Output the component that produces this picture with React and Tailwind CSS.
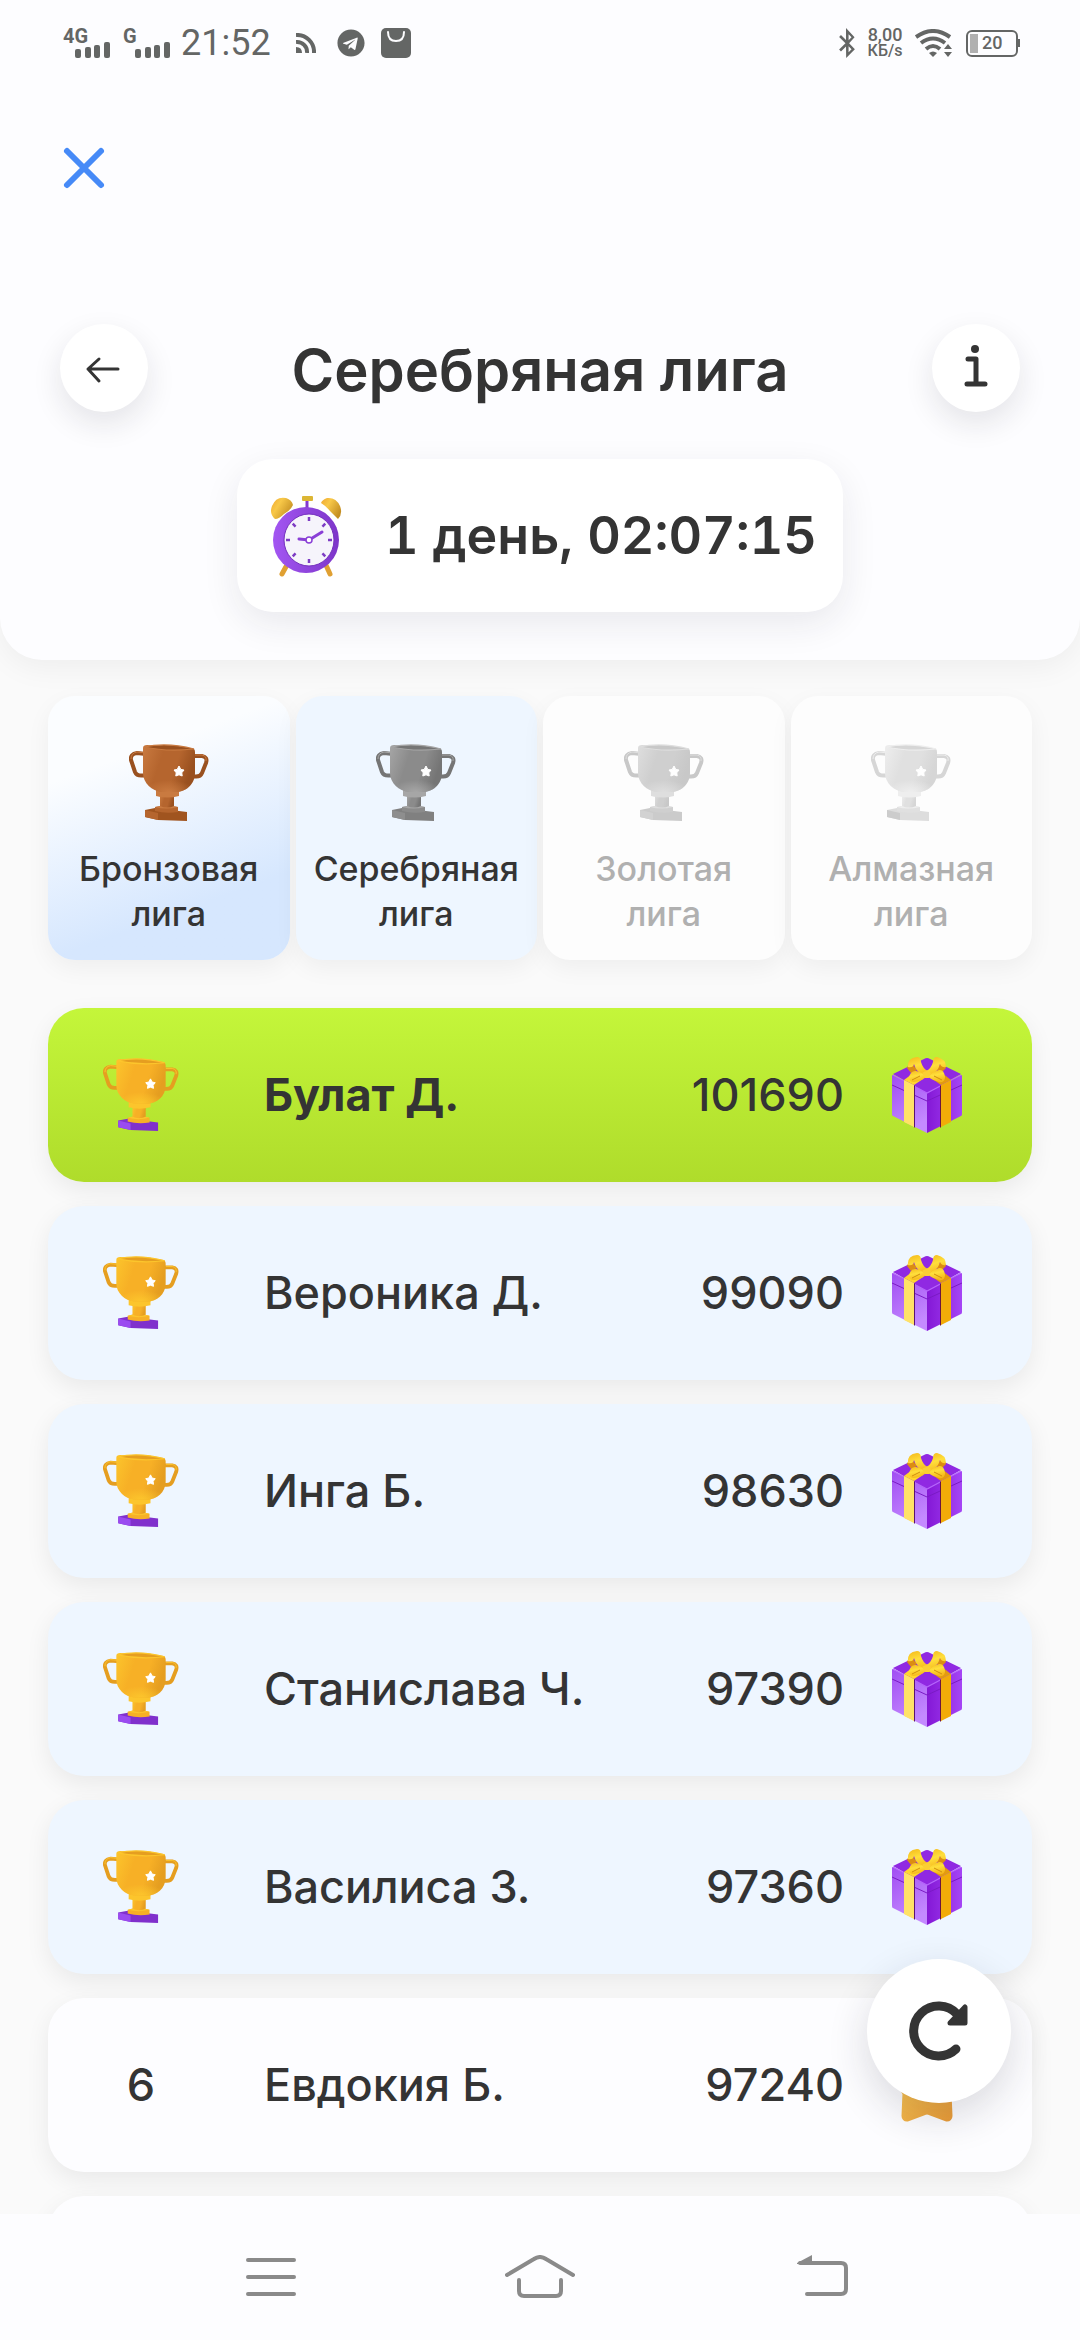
import { FaBluetoothB, FaTelegram } from 'react-icons/fa';

const LEAGUES = [
    { name: 'Бронзовая', metal: 'bronze', card: 'bg-linear-160 from-[#fbfdff] from-25% to-[#d6e7fe] to-75% text-[#343434]' },
    { name: 'Серебряная', metal: 'silver', card: 'bg-[#eef6ff] text-[#343434]' },
    { name: 'Золотая', metal: 'locked', card: 'bg-[#fdfdfd] text-[#b0b0b0]', disabled: true },
    { name: 'Алмазная', metal: 'glass', card: 'bg-[#fdfdfd] text-[#b0b0b0]', disabled: true },
];

const PLAYERS = [
    { place: 1, name: 'Булат Д.', score: 101690, me: true },
    { place: 2, name: 'Вероника Д.', score: 99090 },
    { place: 3, name: 'Инга Б.', score: 98630 },
    { place: 4, name: 'Станислава Ч.', score: 97390 },
    { place: 5, name: 'Василиса З.', score: 97360 },
    { place: 6, name: 'Евдокия Б.', score: 97240 },
];

// [light, mid, dark, base light, base dark]
const METALS = {
    gold: ['#fcc52c', '#f7b026', '#e59e20', '#9a4bf0', '#8030cc'],
    bronze: ['#c97a40', '#b5652e', '#99501f', '#b5652e', '#a0541f'],
    silver: ['#a6a6a6', '#8b8b8b', '#757575', '#8e8e8e', '#808080'],
    locked: ['#dedede', '#cfcfcf', '#c8c8c8', '#d2d2d2', '#cbcbcb'],
    glass: ['#eeeeee', '#e0e0e0', '#d6d6d6', '#cccccc', '#dddddd'],
};

function Trophy({ metal, className }) {
    const [light, mid, dark, baseLight, baseDark] = METALS[metal];
    const id = `bowl-${metal}`;
    return (
        <svg viewBox="0 0 80 78" className={className} aria-hidden="true">
            <defs>
                <linearGradient id={id} x1="0" x2="1" y1="0" y2="0.3">
                    <stop offset="0" stopColor={light} />
                    <stop offset="0.4" stopColor={mid} />
                    <stop offset="0.7" stopColor={mid} />
                    <stop offset="1" stopColor={dark} />
                </linearGradient>
                <radialGradient id={`${id}-glow`} cx="0.5" cy="1" r="0.5">
                    <stop offset="0" stopColor={light} />
                    <stop offset="1" stopColor={light} stopOpacity="0" />
                </radialGradient>
            </defs>
            <g fill="none" strokeLinejoin="round">
                <path d="M17 10 L8 9 Q1 10 2 16 L6 28 Q8 33 17 31" stroke={dark} strokeWidth="4" />
                <path d="M65 12 L73 12 Q79 13 77 19 L73 29 Q71 34 63 32" stroke={dark} strokeWidth="4" />
                <path d="M17 9 L8 8 Q2 9 2 15" stroke={light} strokeWidth="1" />
                <path d="M66 11 L73 11 Q78 12 77 17" stroke={light} strokeWidth="1" />
            </g>
            <path d="M16 66 L26 64 L58 68 V77 L29 76 L16 73 Z" fill={baseDark} />
            <path d="M16 66 L29 69 V76 L16 73 Z" fill={baseLight} />
            <path d="M26 63 Q37 60 49 63 V68 Q37 70 26 67 Z" fill={mid} />
            <path d="M26 63 Q37 60 49 63 Q37 66 26 63 Z" fill={light} />
            <path d="M31 50 H45 V62 Q38 65 31 62 Z" fill={`url(#${id})`} />
            <path d="M27 46 H50 V52 Q38 55 27 52 Z" fill={light} />
            <path d="M14 4 Q14 1 18 1 L62 4 Q66 4 66 8 V29 C66 41 56 48 47 48 H33 C23 47 14 39 14 29 Z" fill={`url(#${id})`} />
            <path d="M14 24 H66 V29 C66 41 56 48 47 48 H33 C23 47 14 39 14 29 Z" fill={`url(#${id}-glow)`} />
            <path d="M15 3 Q38 -2 65 5 Q38 8 15 3 Z" fill={dark} stroke={light} strokeWidth="1.2" />
            <path d="M50 22 L51.8 25.4 L55 26 L52.8 28.8 L53.2 32 L50 30.8 L46.8 32 L47.2 28.8 L45 26 L48.2 25.4 Z" fill="#fff" stroke="#fff" strokeLinejoin="round" />
        </svg>
    );
}

function Gift() {
    return (
        <svg viewBox="0 0 70 76" className="h-[76px] w-[70px]" aria-hidden="true">
            <defs>
                <linearGradient id="gift-left" x1="0" y1="0" x2="0.4" y2="1">
                    <stop offset="0" stopColor="#a04cf2" />
                    <stop offset="1" stopColor="#c48aff" />
                </linearGradient>
                <linearGradient id="gift-right" x1="0" y1="0" x2="1" y2="0">
                    <stop offset="0" stopColor="#8418d6" />
                    <stop offset="1" stopColor="#a545f5" />
                </linearGradient>
                <linearGradient id="ribbon" x1="0" y1="0" x2="0.3" y2="1">
                    <stop offset="0" stopColor="#f4b81a" />
                    <stop offset="0.5" stopColor="#ffdf3c" />
                    <stop offset="1" stopColor="#f6b81c" />
                </linearGradient>
            </defs>
            <path d="M0 18 L35 34 V76 L1 59 Q0 59 0 57 Z" fill="url(#gift-left)" />
            <path d="M70 18 L35 34 V76 L69 59 Q70 59 70 57 Z" fill="url(#gift-right)" />
            <path d="M1 17 L32 2 Q35 0 38 2 L69 17 L37 35 Q35 36 33 35 Z" fill="#9029e2" />
            <path d="M0 28 L35 44 L70 28" fill="none" stroke="#7a1bc4" strokeWidth="1" />
            <path d="M1 18 L35 36 L69 18" fill="none" stroke="#b565fb" strokeWidth="1.2" />
            <path d="M12 23 L22 28 V70 L12 65 Z" fill="#ffe267" />
            <path d="M22 28 L23 29 V71 L22 70 Z" fill="#5a1470" />
            <path d="M59 23 L49 28 V70 L59 65 Z" fill="#f2ab08" />
            <path d="M49 28 L48 29 V71 L49 70 Z" fill="#6a1440" />
            <path d="M12 23 L20 17 L31 22 L22 28 Z" fill="#ffd62e" />
            <path d="M59 23 L50 16 L39 21 L49 28 Z" fill="#e39b10" />
            {/* bow */}
            <path d="M15 11 L18 4 L25 13 L19 16 Z M54 11 L51 4 L44 13 L50 15 Z" fill="#dc8d12" />
            <path d="M16 10 Q15 1 25 0 Q29 0 29 5 Q31 12 36 14 L33 20 Q24 15 22 7 Q21 11 16 10 Z" fill="url(#ribbon)" />
            <path d="M54 10 Q54 2 45 0 Q41 0 41 5 Q39 12 34 14 L37 20 Q46 15 48 7 Q50 11 54 10 Z" fill="url(#ribbon)" />
            <path d="M17 20 Q19 13 24 14 Q30 15 34 20 Q30 24 22 25 Q17 25 17 20 Z" fill="url(#ribbon)" />
            <path d="M53 20 Q52 12 47 13 Q40 15 36 20 Q40 23 47 25 Q53 26 53 20 Z" fill="url(#ribbon)" />
            <path d="M30 16 Q35 12 39 16 L37 21 H33 Z" fill="#fbcf34" />
            <path d="M20 23 L28 19 M50 23 L42 19" fill="none" stroke="#cf9010" strokeWidth="1" />
        </svg>
    );
}

function StarMedal() {
    return (
        <svg viewBox="0 0 70 76" className="h-[76px] w-[70px]" aria-hidden="true">
            <defs>
                <linearGradient id="medal" x1="0" y1="0" x2="1" y2="1">
                    <stop offset="0" stopColor="#ffd35a" />
                    <stop offset="1" stopColor="#e99a36" />
                </linearGradient>
            </defs>
            <path
                d="M35 4 L44 24 L66 27 L55 46 L56 69 Q56 70 55 70 L39 64 Q35 62 31 64 L15 70 Q14 70 14 69 L15 46 L4 27 L26 24 Z"
                fill="url(#medal)" stroke="url(#medal)" strokeWidth="9" strokeLinejoin="round"
            />
        </svg>
    );
}

function AlarmClock() {
    const ticks = [0, 45, 90, 135, 180, 225, 270, 315];
    return (
        <svg viewBox="0 0 72 84" className="h-[84px] w-[72px]" aria-hidden="true">
            <defs>
                <linearGradient id="bell" x1="0" y1="0" x2="1" y2="0.6">
                    <stop offset="0" stopColor="#f0a830" />
                    <stop offset="0.4" stopColor="#f8c848" />
                    <stop offset="1" stopColor="#c48e22" />
                </linearGradient>
                <linearGradient id="clock-body" x1="0" y1="0" x2="1" y2="0">
                    <stop offset="0" stopColor="#a356f2" />
                    <stop offset="1" stopColor="#7d35c9" />
                </linearGradient>
            </defs>
            <g stroke="#e0a032" strokeWidth="5" strokeLinecap="round">
                <path d="M18 69 L12 80" />
                <path d="M55 69 L60 80" />
            </g>
            <path d="M37 5 V14" stroke="#8438d0" strokeWidth="3" />
            <rect x="32" y="2" width="11" height="5" rx="1" fill="#dcb634" />
            <path d="M5 25 Q-1 20 2 12 Q6 2 16 4 Q22 6 23 11 Q20 17 14 20 Q9 25 5 25 Z" fill="url(#bell)" />
            <path d="M68 25 Q73 20 70 12 Q66 3 57 4 Q52 6 51 9 Q56 12 60 17 Z" fill="url(#bell)" />
            <ellipse cx="36" cy="46" rx="33" ry="33" fill="url(#clock-body)" />
            <ellipse cx="39" cy="46" rx="25" ry="26" fill="#f6f4fb" stroke="#7430bd" strokeWidth="1" />
            <g stroke="#7d3cc4" strokeWidth="2.5">
                {ticks.map((angle) => (
                    <path key={angle} d="M39 23 V27" transform={`rotate(${angle} 39 46)`} />
                ))}
            </g>
            <path d="M29 45 L39 46 L52 38" fill="none" stroke="#8a3fd6" strokeWidth="3" strokeLinecap="round" />
            <circle cx="39" cy="46" r="3" fill="#fff" stroke="#8a3fd6" strokeWidth="1.5" />
        </svg>
    );
}

function Signal({ label }) {
    return (
        <div className="flex h-[30px] items-start">
            <span className="w-3 text-xl leading-4 font-bold whitespace-nowrap">{label}</span>
            <svg viewBox="0 0 35 16" className="mt-[14px] h-4 w-[35px] fill-current" aria-hidden="true">
                <rect x="0" y="7" width="6" height="9" rx="2" />
                <rect x="10" y="5" width="6" height="11" rx="2" />
                <rect x="19" y="3" width="6" height="13" rx="2" />
                <rect x="29" y="0" width="6" height="16" rx="2" />
            </svg>
        </div>
    );
}

function StatusBar() {
    return (
        <div className="flex items-start justify-between px-[60px] pt-[28px] font-[Roboto,sans-serif] text-[#646665]">
            <div className="flex h-[30px] items-center">
                <div className="flex gap-[13px] pl-[3px]">
                    <Signal label="4G" />
                    <Signal label="G" />
                </div>
                <span className="ml-[11px] text-4xl leading-[30px]">21:52</span>
                <svg viewBox="0 0 20 20" className="ml-[25px] size-5" fill="none" stroke="currentColor" strokeWidth="4" aria-hidden="true">
                    <path d="M0 2 A17 17 0 0 1 18 20" />
                    <path d="M0 9 A10 10 0 0 1 11 20" />
                    <path d="M0 14 Q6 14 6 20 H0 Z" fill="currentColor" stroke="none" />
                </svg>
                <FaTelegram className="ml-[21px] size-7" />
                <svg viewBox="0 0 30 30" className="ml-4 size-[30px]" aria-hidden="true">
                    <rect width="30" height="30" rx="5" fill="currentColor" />
                    <path d="M7 4 Q7 13 15 13 Q23 13 23 4" fill="none" stroke="#fdfdff" strokeWidth="2" strokeLinecap="round" />
                </svg>
            </div>
            <div className="flex h-[30px] items-center">
                <FaBluetoothB className="h-[30px] w-[20px]" />
                <div className="ml-[10px] w-9 text-center font-medium">
                    <div className="text-lg leading-4">8,00</div>
                    <div className="text-base leading-4">КБ/s</div>
                </div>
                <svg viewBox="0 0 38 28" className="ml-3 h-7 w-[38px]" aria-hidden="true">
                    <g fill="none" stroke="currentColor" strokeWidth="4">
                        <path d="M1 8 Q18 -4 35 8" />
                        <path d="M6 14 Q18 5 30 14" />
                        <path d="M11 20 Q18 14 25 20" />
                    </g>
                    <path d="M18 28 L14 24 Q18 21 22 24 Z M33 15 L37 20 H29 Z M33 28 L37 23 H29 Z" fill="currentColor" />
                </svg>
                <div className="ml-[13px] flex h-[27px] w-[52px] items-center rounded-[6px] border-2 border-current pl-[2px]">
                    <div className="h-[19px] w-2 bg-[#b0b0b0]" />
                    <span className="ml-1 text-lg leading-5 font-medium">20</span>
                </div>
                <div className="h-2 w-[2px] bg-current" />
            </div>
        </div>
    );
}

function RoundButton({ label, children }) {
    return (
        <button aria-label={label} className="size-[88px] rounded-full bg-white shadow-[0_12px_30px_rgba(30,30,50,0.11)]">
            <svg viewBox="0 0 88 88" className="size-full" fill="none" stroke="#343434" strokeWidth="4" strokeLinecap="round" strokeLinejoin="round" aria-hidden="true">
                {children}
            </svg>
        </button>
    );
}

function Header() {
    return (
        <header className="shrink-0 rounded-b-[42px] bg-[#fdfdff] pb-12 shadow-[0_8px_30px_rgba(0,0,0,0.05)]">
            <StatusBar />
            <div className="px-[60px] pt-[86px]">
                <button aria-label="Закрыть" className="block size-12">
                    <svg viewBox="0 0 48 48" className="size-full" stroke="#468af7" strokeWidth="6" strokeLinecap="round" aria-hidden="true">
                        <path d="M7 7 L41 41 M41 7 L7 41" />
                    </svg>
                </button>
            </div>
            <div className="flex items-center justify-between px-[60px] pt-[132px]">
                <RoundButton label="Назад">
                    <path d="M58 45 H28 M39 35 L28 45 L39 57" strokeWidth="3" />
                </RoundButton>
                <h1 className="pt-1 text-[58px] leading-[84px] font-semibold">Серебряная лига</h1>
                <RoundButton label="Информация">
                    <circle cx="43" cy="25" r="4" fill="#343434" stroke="none" />
                    <path d="M36 35 H44 V60 M35 60 H53" strokeWidth="5" />
                </RoundButton>
            </div>
            <div className="mx-auto mt-[47px] flex h-[153px] w-[606px] items-center justify-between rounded-[36px] bg-white pr-[26px] pl-[33px] shadow-[0_12px_36px_rgba(30,30,50,0.09)]">
                <AlarmClock />
                <time className="text-[52px] leading-[60px] font-semibold tabular-nums">1 день, 02:07:15</time>
            </div>
        </header>
    );
}

function LeagueTabs() {
    return (
        <div className="grid grid-cols-4 gap-[6px]">
            {LEAGUES.map((league) => (
                <button
                    key={league.name}
                    disabled={league.disabled}
                    className={`flex h-[264px] flex-col items-center rounded-[27px] pt-12 text-[34px] leading-[45px] font-[450] shadow-[0_8px_24px_rgba(0,0,0,0.05)] ${league.card}`}
                >
                    <Trophy metal={league.metal} className="mb-6 h-[78px] w-20" />
                    <span>{league.name}</span>
                    <span>лига</span>
                </button>
            ))}
        </div>
    );
}

function rowColor(player) {
    if (player.me) return 'bg-linear-to-b from-[#c4f63a] to-[#afdc2b] font-bold';
    return player.place <= 5 ? 'bg-[#eef6ff] font-[450]' : 'bg-[#fdfdff] font-[450]';
}

function PlayerRow({ player }) {
    return (
        <li className={`flex h-[174px] shrink-0 items-center rounded-[36px] pr-[70px] text-[45px] leading-[60px] shadow-[0_8px_24px_rgba(0,0,0,0.07)] ${rowColor(player)}`}>
            <div className="flex w-[186px] justify-center">
                {player.place <= 5 ? <Trophy metal="gold" className="h-[74px] w-[76px]" /> : player.place}
            </div>
            <span className="ml-[30px] flex-1">{player.name}</span>
            <span className="mr-12 font-[450]">{player.score}</span>
            {player.place <= 5 ? <Gift /> : <StarMedal />}
        </li>
    );
}

function NavBar() {
    return (
        <nav className="grid h-[126px] shrink-0 grid-cols-3 place-items-center bg-[#fdfdff] px-[136px]">
            <button aria-label="Меню">
                <svg viewBox="0 0 50 44" className="h-11 w-[50px]" stroke="#8a8a8a" strokeWidth="4" strokeLinecap="round" aria-hidden="true">
                    <path d="M2 5 H48 M2 22 H48 M2 39 H48" />
                </svg>
            </button>
            <button aria-label="Домой">
                <svg viewBox="0 0 70 44" className="h-11 w-[70px]" fill="none" stroke="#8a8a8a" strokeWidth="4" strokeLinecap="round" aria-hidden="true">
                    <path d="M2 20 L29 4 Q35 0 41 4 L68 20" />
                    <path d="M14 25 V36 Q14 41 19 41 H51 Q56 41 56 36 V25" />
                </svg>
            </button>
            <button aria-label="Вернуться">
                <svg viewBox="0 0 78 44" className="h-11 w-[78px]" aria-hidden="true">
                    <path d="M30 8 H71 Q76 8 76 13 V34 Q76 39 71 39 H37" fill="none" stroke="#8a8a8a" strokeWidth="4" strokeLinecap="round" />
                    <path d="M27 8 L42 0 V9 H27 Z" fill="#8a8a8a" />
                </svg>
            </button>
        </nav>
    );
}

export default function App() {
    return (
        <div className="flex h-screen flex-col bg-[#fafafa] font-[Inter,sans-serif] text-[#343434]">
            <div className="relative flex min-h-0 flex-1 flex-col">
                <div className="flex min-h-0 flex-1 flex-col overflow-y-auto [scrollbar-width:none]">
                    <Header />
                    <main className="px-12 pt-9">
                        <LeagueTabs />
                        <ol className="flex flex-col gap-6 pt-12">
                            {PLAYERS.map((player) => (
                                <PlayerRow key={player.place} player={player} />
                            ))}
                            <li className="h-[174px] shrink-0 rounded-[36px] bg-[#fdfdff] shadow-[0_8px_24px_rgba(0,0,0,0.07)]" />
                        </ol>
                    </main>
                </div>
                {/* Floating refresh button */}
                <button
                    aria-label="Обновить"
                    className="absolute right-[69px] bottom-[111px] size-36 rounded-full bg-white shadow-[0_14px_40px_rgba(30,30,50,0.16)]"
                >
                    <svg viewBox="0 0 144 144" className="size-full" strokeLinecap="round" strokeLinejoin="round" aria-hidden="true">
                        <path d="M89 90 A25 25 0 1 1 90 55" fill="none" stroke="#343434" strokeWidth="9" />
                        <path d="M98 48 L98 64 L83 64 Z" fill="#343434" stroke="#343434" strokeWidth="5" />
                    </svg>
                </button>
            </div>
            <NavBar />
        </div>
    );
}
